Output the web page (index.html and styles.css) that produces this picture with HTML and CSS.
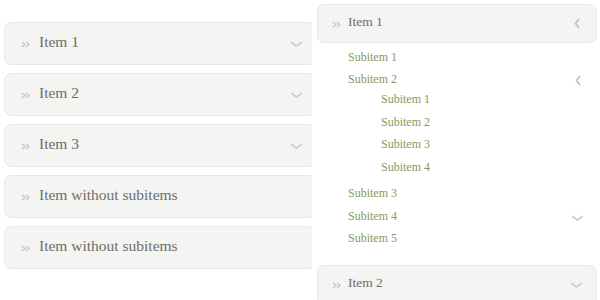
FILE: index.html
```html
<!DOCTYPE html>
<html lang="en">
<head>
    <meta charset="UTF-8">
    <title>Accordion Menu</title>
    <link rel="stylesheet" href="styles.css">
</head>
<body>
    <div class="page">
        <!-- collapsed menu -->
        <div class="menu menu-left">
            <div class="item">
                <svg class="bullet" width="10" height="7" viewBox="0 0 10 7"><path d="M1 1l3 2.5L1 6M5 1l3 2.5L5 6" fill="none" stroke="#c9c9c6" stroke-width="1.5"/></svg>
                <span class="label">Item 1</span>
                <svg class="chev-down" width="13" height="6" viewBox="0 0 13 6"><path d="M1 1l5.5 4L12 1" fill="none" stroke="#cfcfcc" stroke-width="1.8"/></svg>
            </div>
            <div class="item">
                <svg class="bullet" width="10" height="7" viewBox="0 0 10 7"><path d="M1 1l3 2.5L1 6M5 1l3 2.5L5 6" fill="none" stroke="#c9c9c6" stroke-width="1.5"/></svg>
                <span class="label">Item 2</span>
                <svg class="chev-down" width="13" height="6" viewBox="0 0 13 6"><path d="M1 1l5.5 4L12 1" fill="none" stroke="#cfcfcc" stroke-width="1.8"/></svg>
            </div>
            <div class="item">
                <svg class="bullet" width="10" height="7" viewBox="0 0 10 7"><path d="M1 1l3 2.5L1 6M5 1l3 2.5L5 6" fill="none" stroke="#c9c9c6" stroke-width="1.5"/></svg>
                <span class="label">Item 3</span>
                <svg class="chev-down" width="13" height="6" viewBox="0 0 13 6"><path d="M1 1l5.5 4L12 1" fill="none" stroke="#cfcfcc" stroke-width="1.8"/></svg>
            </div>
            <div class="item">
                <svg class="bullet" width="10" height="7" viewBox="0 0 10 7"><path d="M1 1l3 2.5L1 6M5 1l3 2.5L5 6" fill="none" stroke="#c9c9c6" stroke-width="1.5"/></svg>
                <span class="label">Item without subitems</span>
            </div>
            <div class="item">
                <svg class="bullet" width="10" height="7" viewBox="0 0 10 7"><path d="M1 1l3 2.5L1 6M5 1l3 2.5L5 6" fill="none" stroke="#c9c9c6" stroke-width="1.5"/></svg>
                <span class="label">Item without subitems</span>
            </div>
        </div>

        <!-- expanded menu -->
        <div class="menu menu-right">
            <div class="item">
                <svg class="bullet" width="10" height="7" viewBox="0 0 10 7"><path d="M1 1l3 2.5L1 6M5 1l3 2.5L5 6" fill="none" stroke="#c9c9c6" stroke-width="1.5"/></svg>
                <span class="label">Item 1</span>
                <svg class="chev-left" width="6" height="11" viewBox="0 0 6 11"><path d="M5 1L1.5 5.5 5 10" fill="none" stroke="#bdbdba" stroke-width="1.6"/></svg>
            </div>
            <ul class="sub">
                <li class="sub-row">Subitem 1</li>
                <li class="sub-row">Subitem 2
                    <svg class="chev-left" width="6" height="11" viewBox="0 0 6 11"><path d="M5 1L1.5 5.5 5 10" fill="none" stroke="#bdbdba" stroke-width="1.6"/></svg>
                </li>
                <li>
                    <ul class="sub-nested">
                        <li class="sub-row">Subitem 1</li>
                        <li class="sub-row">Subitem 2</li>
                        <li class="sub-row">Subitem 3</li>
                        <li class="sub-row">Subitem 4</li>
                    </ul>
                </li>
                <li class="sub-row">Subitem 3</li>
                <li class="sub-row">Subitem 4
                    <svg class="chev-down" width="13" height="6" viewBox="0 0 13 6"><path d="M1 1l5.5 4L12 1" fill="none" stroke="#cfcfcc" stroke-width="1.8"/></svg>
                </li>
                <li class="sub-row">Subitem 5</li>
            </ul>
            <div class="item">
                <svg class="bullet" width="10" height="7" viewBox="0 0 10 7"><path d="M1 1l3 2.5L1 6M5 1l3 2.5L5 6" fill="none" stroke="#c9c9c6" stroke-width="1.5"/></svg>
                <span class="label">Item 2</span>
                <svg class="chev-down" width="13" height="6" viewBox="0 0 13 6"><path d="M1 1l5.5 4L12 1" fill="none" stroke="#cfcfcc" stroke-width="1.8"/></svg>
            </div>
        </div>
    </div>
</body>
</html>
```

FILE: styles.css
```css
body {
    margin: 0;
    background-color: #fff;
    font-family: "Liberation Serif", "DejaVu Serif", serif;
    overflow: hidden;
}

.page {
    display: flex;
    gap: 5px;
    padding: 4px 0 0 4px;
}

.menu-left {
    width: 308px;
    overflow: hidden;
    padding-top: 18px;
    display: flex;
    flex-direction: column;
    gap: 8px;
    flex-shrink: 0;
}

.menu-right {
    width: 280px;
    flex-shrink: 0;
}

.item {
    display: flex;
    align-items: center;
    box-sizing: border-box;
    background-color: #f4f4f2;
    border: 1px solid #e9e9e6;
    border-radius: 7px;
    color: #6e6e67;
}

.menu-left .item {
    width: 312px;
    height: 43px;
    padding: 0 12px 3px 16px;
    font-size: 15.5px;
}

.menu-right .item {
    height: 39px;
    padding: 0 13px 3px 14px;
    font-size: 13.5px;
}

.bullet {
    margin-top: 5px;
    flex-shrink: 0;
}

.menu-left .bullet {
    margin-right: 8px;
}

.menu-right .bullet {
    margin-right: 6px;
}

.label {
    flex: 1;
}

.chev-down {
    margin-top: 4px;
}

.chev-left {
    margin-right: 3px;
    margin-top: 2px;
}

.sub,
.sub-nested {
    list-style: none;
    margin: 0;
    padding: 0;
}

.sub {
    margin: 3px 0 15px;
    padding-left: 31px;
    color: #8c975e;
    font-size: 12px;
}

.sub-row {
    display: flex;
    align-items: center;
    justify-content: space-between;
    height: 22.5px;
    padding-right: 13px;
}

.sub-nested {
    margin: -2.5px 0 4px;
    padding-left: 33px;
}
```
